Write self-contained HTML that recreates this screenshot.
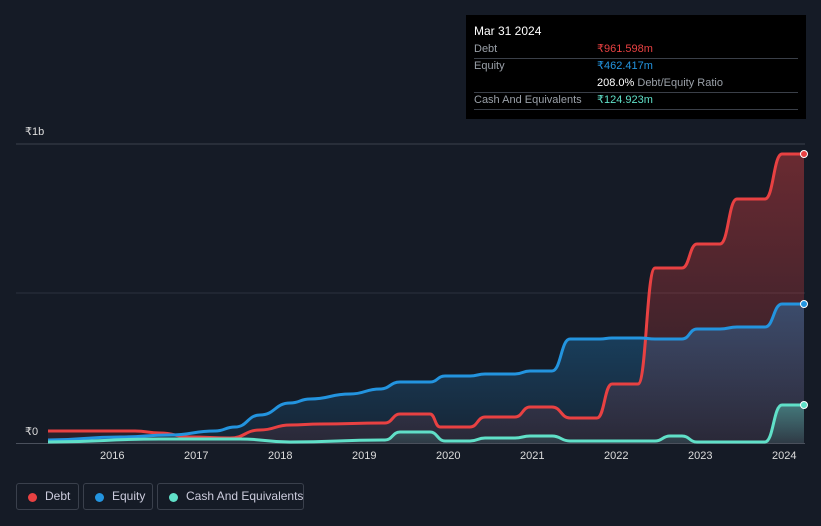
<!DOCTYPE html>
<html><head><meta charset="utf-8"><style>
html,body{margin:0;width:821px;height:526px;overflow:hidden}
body{background:#151b26;font-family:"Liberation Sans",sans-serif;position:relative}
.tt{position:absolute;left:466px;top:15px;width:340px;height:104px;background:#000;color:#fff;font-size:11px}
.tt .r{position:absolute;left:8px;right:8px;border-bottom:1px solid #3a3f48;height:17px;line-height:17px;color:#9aa0a8}
.tt .v{position:absolute;left:123px}
.lab{position:absolute;color:#ddd;font-size:11px}
.leg{position:absolute;top:483px;height:27px;border:1px solid #3a404c;border-radius:3px;color:#ccd;font-size:12px;line-height:25px;box-sizing:border-box;white-space:nowrap}
.leg i{position:absolute;left:11px;top:9px;width:9px;height:9px;border-radius:50%}
</style></head><body>
<svg width="821" height="526" style="position:absolute;left:0;top:0">
<defs>
<linearGradient id="gd" x1="0" y1="0" x2="0" y2="1"><stop offset="0" stop-color="#e84142" stop-opacity=".4"/><stop offset="1" stop-color="#e84142" stop-opacity=".1"/></linearGradient>
<linearGradient id="ge" x1="0" y1="0" x2="0" y2="1"><stop offset="0" stop-color="#2394df" stop-opacity=".35"/><stop offset="1" stop-color="#2394df" stop-opacity=".08"/></linearGradient>
<linearGradient id="gc" x1="0" y1="0" x2="0" y2="1"><stop offset="0" stop-color="#60e0c8" stop-opacity=".4"/><stop offset="1" stop-color="#60e0c8" stop-opacity=".1"/></linearGradient>
</defs>
<line x1="16" y1="144" x2="805" y2="144" stroke="#3a404c"/>
<line x1="16" y1="293" x2="805" y2="293" stroke="#2c323d"/>
<line x1="16" y1="443.5" x2="805" y2="443.5" stroke="#4a505c"/>
<g id="g"></g>
</svg>
<div class="lab" style="left:25px;top:125px">₹1b</div>
<div class="lab" style="left:25px;top:425px">₹0</div>
<div class="lab" style="left:100px;top:450px">2016</div>
<div class="lab" style="left:184px;top:450px">2017</div>
<div class="lab" style="left:268px;top:450px">2018</div>
<div class="lab" style="left:352px;top:450px">2019</div>
<div class="lab" style="left:436px;top:450px">2020</div>
<div class="lab" style="left:520px;top:450px">2021</div>
<div class="lab" style="left:604px;top:450px">2022</div>
<div class="lab" style="left:688px;top:450px">2023</div>
<div class="lab" style="left:772px;top:450px">2024</div>
<div class="tt">
<div style="position:absolute;left:8px;top:9px;font-size:12px">Mar 31 2024</div>
<div class="r" style="top:26px">Debt<span class="v" style="color:#e84142">₹961.598m</span></div>
<div class="r" style="top:43px;border:none">Equity<span class="v" style="color:#2394df">₹462.417m</span></div>
<div class="r" style="top:60px"><span class="v"><b style="color:#fff;font-weight:normal">208.0%</b> Debt/Equity Ratio</span></div>
<div class="r" style="top:77px">Cash And Equivalents<span class="v" style="color:#60e0c8">₹124.923m</span></div>
</div>
<div class="leg" style="left:16px;width:63px"><i style="background:#e84142"></i><span style="position:absolute;left:28px">Debt</span></div>
<div class="leg" style="left:83px;width:70px"><i style="background:#2394df"></i><span style="position:absolute;left:28px">Equity</span></div>
<div class="leg" style="left:157px;width:147px"><i style="background:#60e0c8"></i><span style="position:absolute;left:28px">Cash And Equivalents</span></div>
<script>
var D=[[48,431],[135,431],[160,433],[190,437],[230,438],[260,430],[290,425],[320,424],[385,423],[400,414],[430,414],[440,427],[470,427],[485,417],[515,417],[530,407],[552,407],[570,418],[597,418],[612,384],[638,384],[655,268],[682,268],[697,244],[720,244],[737,199],[765,199],[782,154],[804,154]];
var E=[[48,440],[120,437],[170,435],[215,431],[235,427],[260,415],[290,403],[310,399],[350,394],[380,389],[400,382],[430,382],[445,376],[470,376],[485,374],[515,374],[530,371],[552,371],[570,339],[600,339],[612,338],[640,338],[655,339],[682,339],[697,329],[720,329],[737,327],[765,327],[782,304],[804,304]];
var C=[[48,442],[160,439],[240,439],[290,442],[385,440],[400,432],[430,432],[445,441],[470,441],[485,438],[515,438],[530,436],[552,436],[570,441],[655,441],[670,436],[682,436],[697,442],[765,442],[782,405],[804,405]];
function p(a){var s="M"+a[0][0]+","+a[0][1];for(var i=1;i<a.length;i++){var x0=a[i-1][0],y0=a[i-1][1],x1=a[i][0],y1=a[i][1],m=(x0+x1)/2;s+=" C"+m+","+y0+" "+m+","+y1+" "+x1+","+y1;}return s;}
var g=document.getElementById('g'),h="";
[[D,'#e84142','gd'],[E,'#2394df','ge'],[C,'#60e0c8','gc']].forEach(function(z){var d=p(z[0]);h+='<path d="'+d+' L804,443 L48,443Z" fill="url(#'+z[2]+')"/>';});
[[D,'#e84142'],[E,'#2394df'],[C,'#60e0c8']].forEach(function(z){var d=p(z[0]);var l=z[0][z[0].length-1];h+='<path d="'+d+'" fill="none" stroke="'+z[1]+'" stroke-width="3"/><circle cx="'+l[0]+'" cy="'+l[1]+'" r="3.5" fill="'+z[1]+'" stroke="#fff" stroke-width="1"/>';});
g.innerHTML=h;
</script>
</body></html>
